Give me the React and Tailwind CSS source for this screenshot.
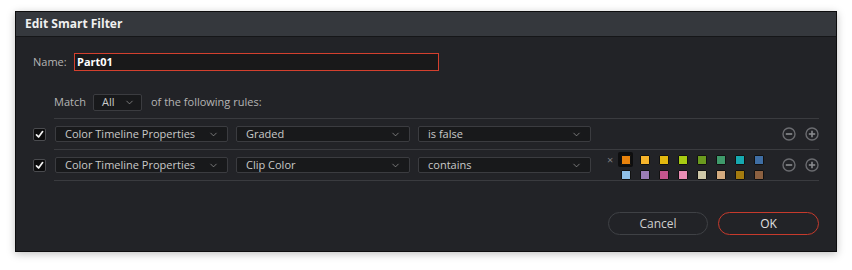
import { ChevronDown } from "lucide-react";

const swatchesTop = ["#e8820c", "#f7b52b", "#e2b90f", "#a8cc12", "#6b9a1f", "#3f9a6b", "#17a9b0", "#3f6ea4"];
const swatchesBottom = ["#8fc0e8", "#9b7bb5", "#c4558d", "#ea8db5", "#cfc8a8", "#d4ab7f", "#a47b0f", "#8c6040"];

function Select({ label, className }) {
  return (
    <div
      className={`flex h-[16px] items-center justify-between rounded-[2px] border border-[#3b3c40] bg-[#18191b] pl-[9px] pr-[8px] text-[11px] text-[#c9c9c9] ${className}`}
    >
      <span>{label}</span>
      <ChevronDown size={11} strokeWidth={1.5} className="text-[#a0a0a0]" />
    </div>
  );
}

function Checkbox() {
  return (
    <div className="flex h-[13px] w-[13px] items-center justify-center rounded-[2px] border border-[#4a4b4f] bg-[#0c0c0d]">
      <svg width="9" height="9" viewBox="0 0 9 9">
        <path d="M1.5 4.8 L3.6 7 L7.6 1.6" fill="none" stroke="#f2f2f2" strokeWidth="1.7" strokeLinecap="round" strokeLinejoin="round" />
      </svg>
    </div>
  );
}

function CircleBtn({ plus }) {
  return (
    <svg width="14" height="14" viewBox="0 0 14 14">
      <circle cx="7" cy="7" r="6" fill="none" stroke="#6b6c70" strokeWidth="1.4" />
      <path d="M3.8 7 H10.2" stroke="#8a8b8f" strokeWidth="1.6" />
      {plus && <path d="M7 3.8 V10.2" stroke="#8a8b8f" strokeWidth="1.6" />}
    </svg>
  );
}

function Swatch({ color, selected }) {
  return (
    <div
      className={`flex h-[15px] w-[15px] items-center justify-center rounded-[2px] ${selected ? "bg-[#0e0e0f]" : ""}`}
    >
      <div className="h-[10px] w-[10px] rounded-[1px] border border-[#111]" style={{ backgroundColor: color }} />
    </div>
  );
}

export default function App() {
  return (
    <div className="h-[270px] w-[852px] bg-white pl-[15px] pt-[11px] font-['Open_Sans',sans-serif]">
      <div className="h-[241px] w-[822px] border border-[#0d0d0e] bg-[#222327] shadow-[0_2px_8px_rgba(0,0,0,0.25)]">
        <div className="flex h-[25px] items-center border-b border-[#151618] bg-[#35383d] pl-[9px] text-[12px] font-bold text-[#f0f0f0]">
          Edit Smart Filter
        </div>

        <div className="pl-[17px] pt-[16px]">
          <div className="flex items-center">
            <span className="w-[40px] text-[11px] text-[#b5b5b5]">Name:</span>
            <div className="ml-[1px] flex h-[18px] w-[365px] items-center border border-[#d4402e] bg-[#19191a] pl-[2px] text-[11px] font-bold text-white">
              Part01
            </div>
          </div>

          <div className="ml-[21px] mt-[23px] flex items-center">
            <span className="text-[11px] text-[#b5b5b5]">Match</span>
            <div className="ml-[7px] flex h-[17px] w-[49px] items-center justify-between rounded-[2px] border border-[#3b3c40] bg-[#18191b] pl-[8px] pr-[6px] text-[11px] text-[#c9c9c9]">
              <span>All</span>
              <ChevronDown size={11} strokeWidth={1.5} className="text-[#a0a0a0]" />
            </div>
            <span className="ml-[9px] text-[11px] text-[#b5b5b5]">of the following rules:</span>
          </div>

          <div className="ml-[21px] mr-[17px] mt-[7px] h-[1px] bg-[#3a3b3f]" />

          <div className="flex h-[30px] items-center">
            <Checkbox />
            <Select label="Color Timeline Properties" className="ml-[9px] w-[173px]" />
            <Select label="Graded" className="ml-[8px] w-[174px]" />
            <Select label="is false" className="ml-[8px] w-[173px]" />
            <div className="ml-auto mr-[17px] flex items-center gap-[9px]">
              <CircleBtn />
              <CircleBtn plus />
            </div>
          </div>

          <div className="ml-[21px] mr-[17px] h-[1px] bg-[#3a3b3f]" />

          <div className="flex h-[30px] items-center">
            <Checkbox />
            <Select label="Color Timeline Properties" className="ml-[9px] w-[173px]" />
            <Select label="Clip Color" className="ml-[8px] w-[174px]" />
            <Select label="contains" className="ml-[8px] w-[173px]" />
            <div className="ml-[13px] flex flex-col self-start pt-[2px]">
              <div className="flex items-center">
                <span className="w-[14px] pl-[3px] text-[11px] leading-none text-[#7a7b7f]">×</span>
                <div className="flex gap-[4px]">
                  {swatchesTop.map((c, i) => (
                    <Swatch key={c} color={c} selected={i === 0} />
                  ))}
                </div>
              </div>
              <div className="flex gap-[4px] pl-[14px]">
                {swatchesBottom.map((c) => (
                  <Swatch key={c} color={c} />
                ))}
              </div>
            </div>
            <div className="ml-auto mr-[17px] flex items-center gap-[9px]">
              <CircleBtn />
              <CircleBtn plus />
            </div>
          </div>

          <div className="ml-[21px] mr-[17px] h-[1px] bg-[#3a3b3f]" />

          <div className="mr-[17px] mt-[31px] flex justify-end gap-[10px]">
            <button className="flex h-[23px] w-[100px] items-center justify-center rounded-full border border-[#3f4145] text-[12px] text-[#cfcfcf]">
              Cancel
            </button>
            <button className="flex h-[23px] w-[101px] items-center justify-center rounded-full border border-[#c63a2c] text-[12px] text-[#e0e0e0]">
              OK
            </button>
          </div>
        </div>
      </div>
    </div>
  );
}
